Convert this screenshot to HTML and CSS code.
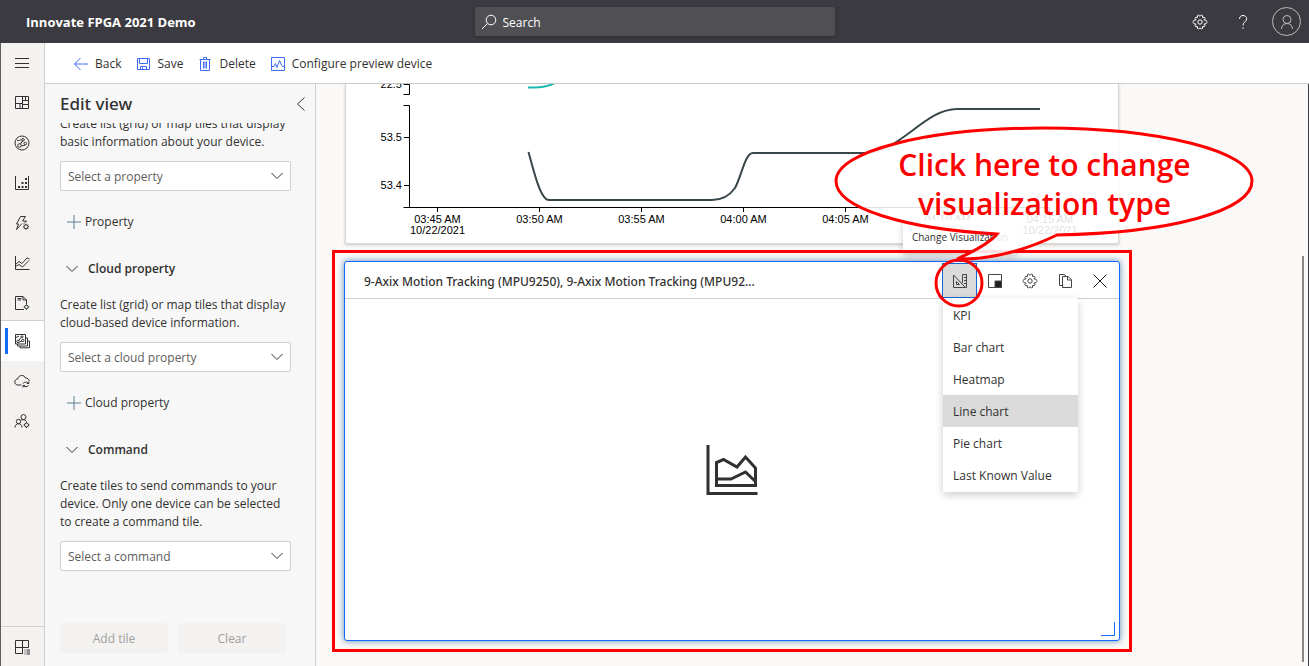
FILE: index.html
```
<!DOCTYPE html>
<html lang="en">
<head>
<meta charset="utf-8">
<title>Innovate FPGA 2021 Demo</title>
<link rel="stylesheet" href="styles.css">
</head>
<body>
<svg class="defs" aria-hidden="true">
  <symbol id="gear" viewBox="0 0 16 16"><path d="M6.700 1 8 2.300 9.300 1l1.200.5v1.900l1.900-.1.600 1.200L11.900 5.900 14 6.200l.8 1.200v1.200L14 9.800l-2.100.3 1.100 1.400-.6 1.200-1.900-.1v1.900L9.300 15 8 13.700 6.700 15l-1.200-.5v-1.900l-1.900.1L3 11.500l1.100-1.400L2 9.800l-.8-1.200V7.400L2 6.200l2.100-.3L3 4.500l.6-1.200 1.900.1V1.500z"/><circle cx="8" cy="8" r="2.200"/></symbol>
  <symbol id="chevron" viewBox="0 0 12 12"><path d="M.5 3 6 8.500 11.500 3"/></symbol>
  <symbol id="plus" viewBox="0 0 14 14"><path d="M7 0v14M0 7h14"/></symbol>
</svg>
<header class="topbar">
  <h1 class="brand">Innovate FPGA 2021 Demo</h1>
  <label class="search">
    <svg class="icon" viewBox="0 0 16 16"><circle cx="10" cy="6" r="4.800"/><path d="M6.500 9.500 1 15"/></svg>
    <input class="search-input" type="search" placeholder="Search" aria-label="Search">
  </label>
  <div class="top-actions">
    <button class="top-btn" aria-label="Settings"><svg class="icon"><use href="#gear"/></svg></button>
    <button class="top-btn" aria-label="Help"><svg class="icon" viewBox="0 0 16 16"><path d="M4.500 5C4.500 2.800 6 1.500 8 1.500S11.700 2.800 11.700 4.800C11.700 7.500 8 8 8 11.500M8 13.300v1.500"/></svg></button>
    <button class="avatar" aria-label="Account"><svg class="icon" viewBox="0 0 16 16"><circle cx="8" cy="5.500" r="4"/><path d="M2.500 15c0-3 2-5.500 5.500-5.500s5.500 2.500 5.500 5.500"/></svg></button>
  </div>
</header>
<div class="shell">
  <nav class="rail" aria-label="Main">
    <button class="rail-item" aria-label="Expand"><svg class="icon" viewBox="0 0 16 16"><path d="M1 3.500h14M1 8.500h14M1 12.500h14"/></svg></button>
    <a class="rail-item" href="#dashboard" aria-label="Dashboard"><svg class="icon" viewBox="0 0 16 16"><path d="M1.500 1.500h13v12h-13zM8.500 1.500v12M1.500 8.500h7M8.500 5.500h6M8.500 9.500h6M6 8.500v5M11.500 1.500v4"/></svg></a>
    <a class="rail-item" href="#devices" aria-label="Devices"><svg class="icon" viewBox="0 0 16 16"><circle cx="8" cy="8" r="7"/><circle cx="9" cy="4.800" r="1.300"/><circle cx="5.500" cy="10.500" r="1.800"/><circle cx="11.300" cy="8.600" r="1.300"/><path d="M8.500 6 6.500 9M7.300 10.800l2.500-.3 1.300-.7M3 5.500c2 .5 3.500-.5 4.500-1"/></svg></a>
    <a class="rail-item" href="#groups" aria-label="Device groups"><svg class="icon" viewBox="0 0 16 16"><path d="M1.500 1v13.500h13V1"/><path stroke-width="2" stroke-dasharray="2 2" d="M5 13V9M8.500 13V5M12 13V3"/></svg></a>
    <a class="rail-item" href="#rules" aria-label="Rules"><svg class="icon" viewBox="0 0 16 16"><path d="M8 8.500 2.500 14.500 4.500 9H2.500L6.500 1.500h5L8.500 6h4L10 8.500"/><circle cx="12" cy="11.700" r="2"/><path d="M12 8.700v1M12 13.700v1M9 11.700h1M14 11.700h1M9.900 9.600l.7.700M13.400 13.100l.7.700M14.100 9.600l-.7.700M10.600 13.100l-.7.700"/></svg></a>
    <a class="rail-item" href="#analytics" aria-label="Analytics"><svg class="icon" viewBox="0 0 16 16"><path d="M1.500 1v13.500H15.500M1.500 9.500 5 6.500l3 2L13 3l2.500 1M1.500 11.500 5 9.500 8.500 12 15 5.500"/></svg></a>
    <a class="rail-item" href="#jobs" aria-label="Jobs"><svg class="icon" viewBox="0 0 16 16"><path d="M10 14.500H1.500v-13H9l3.500 3.500v4M9 1.500V5h3.500M3.500 3.500h4M3.500 5H7"/><circle cx="12.500" cy="12" r="1.800"/><path d="M12.500 9.300v1M12.500 13.700v1M9.700 12h1M14.300 12h1"/></svg></a>
    <a class="rail-item rail-item-current" href="#templates" aria-label="Device templates" aria-current="page"><svg class="icon" viewBox="0 0 16 16"><path d="M1.500 1.500h10V11h-10zM3.500 11v2h10V5h-2M6 13v1.800h9.500V8h-2"/><circle cx="8" cy="3.800" r="1"/><circle cx="4" cy="8.500" r="1.300"/><circle cx="8.800" cy="7.500" r="1.200"/><path d="M7 4.500 4.800 7.500M5.300 9l2.500-1M2 4.500l3-1.500"/></svg></a>
    <a class="rail-item" href="#export" aria-label="Data export"><svg class="icon" viewBox="0 0 16 16"><path d="M7.500 12H4C2 12 .8 10.700.8 9s1.300-3 3-3C4 4 5.500 2.500 7.700 2.500c2 0 3.200 1 3.800 2.500 2 0 3.500 1.200 3.700 3M9 10.500c.5-1.500 4.500-2 5.500 0M14.800 8.500v2h-2M14.500 12.500c-.8 1.500-4.500 1.700-5.500 0M9 14.500v-2h2"/></svg></a>
    <a class="rail-item" href="#admin" aria-label="Permissions"><svg class="icon" viewBox="0 0 16 16"><circle cx="9.500" cy="4" r="2.500"/><circle cx="4.500" cy="8.500" r="2.200"/><path d="M1 14.500c0-5 7-5 7 0M6.500 7.300c.8-.8 5-1 6 1.200"/><circle cx="12.500" cy="12" r="2"/><path d="M12.500 9v1M12.500 14v1M9.500 12h1M14.500 12h1"/></svg></a>
    <a class="rail-item rail-item-last" href="#apps" aria-label="Application"><svg class="icon" viewBox="0 0 16 16"><path d="M9 14.500H1.500v-13h13V8.500M8.500 1.500v13M1.500 8.500h13M10.500 11h1M12.500 11H16M10.500 13h1M12.500 13H16M10.500 15h1M12.500 15H16"/></svg></a>
  </nav>
  <main class="main">
    <div class="commands">
      <button class="command"><svg class="icon" viewBox="0 0 16 16"><path d="M15 8H1.500M7.500 2l-6 6 6 6"/></svg>Back</button>
      <button class="command"><svg class="icon" viewBox="0 0 16 16"><path d="M2.500 2.500h12v11h-12zM4.500 2.500v5h8v-5M5.500 13.500v-3h6v3M7.500 11.500v2"/></svg>Save</button>
      <button class="command"><svg class="icon" viewBox="0 0 16 16"><path d="M2.500 3.500h11M6.500 3.500v-2h3v2M3.500 3.500v11h9v-11M6.500 5.500v7M8 5.500v7M9.500 5.500v7"/></svg>Delete</button>
      <button class="command"><svg class="icon" viewBox="0 0 16 16"><path d="M1.500 1.500h13v13h-13zM1.500 10.500H4l1.500-3L7 11.500l2.500-7L11.500 9l1 1.500h2"/></svg>Configure preview device</button>
    </div>
    <div class="workspace">
      <aside class="panel">
        <div class="panel-head">
          <h2 class="panel-title">Edit view</h2>
          <button class="collapse" aria-label="Collapse"><svg class="icon" viewBox="0 0 16 16"><path d="M11.500 1.500 4.500 8l7 6.500"/></svg></button>
        </div>
        <div class="panel-body">
          <section class="group group-scrolled">
            <p class="hint">Create list (grid) or map tiles that display basic information about your device.</p>
            <div class="picker"><select class="picker-field" aria-label="Property"><option>Select a property</option></select><svg class="picker-arrow"><use href="#chevron"/></svg></div>
            <button class="add"><svg class="add-icon"><use href="#plus"/></svg>Property</button>
          </section>
          <section class="group">
            <button class="group-toggle"><svg class="toggle-icon"><use href="#chevron"/></svg>Cloud property</button>
            <p class="hint">Create list (grid) or map tiles that display cloud-based device information.</p>
            <div class="picker"><select class="picker-field" aria-label="Cloud property"><option>Select a cloud property</option></select><svg class="picker-arrow"><use href="#chevron"/></svg></div>
            <button class="add"><svg class="add-icon"><use href="#plus"/></svg>Cloud property</button>
          </section>
          <section class="group">
            <button class="group-toggle"><svg class="toggle-icon"><use href="#chevron"/></svg>Command</button>
            <p class="hint">Create tiles to send commands to your device. Only one device can be selected to create a command tile.</p>
            <div class="picker"><select class="picker-field" aria-label="Command"><option>Select a command</option></select><svg class="picker-arrow"><use href="#chevron"/></svg></div>
          </section>
        </div>
        <div class="panel-foot">
          <button class="foot-btn" disabled>Add tile</button>
          <button class="foot-btn" disabled>Clear</button>
        </div>
      </aside>
      <div class="canvas">
        <section class="tile tile-chart">
          <svg class="chart" viewBox="346 84 772 159" role="img" aria-label="Telemetry line chart">
            <path class="axis" d="M403.500 84.500h6v10h-6M403.500 105.500h6v102M404 137.500h5M404 185.500h5M403.500 207.500H1050M437.500 207v5M539.500 207v5M641.500 207v5M743.500 207v5M845.500 207v5M947.500 207v5M1049.500 207v5"/>
            <path class="series series-teal" d="M528 87.500C538 88 547 87 555 83"/>
            <path class="series" d="M528.500 152C534 172 539 193 546 199Q547 200 550 200H712C722 200 730 195 735 188C742 175 745 153 753 153H865C900 153 925 108 958 109H1040"/>
            <g class="label" text-anchor="end"><text x="402" y="88">22.5</text><text x="402" y="141">53.5</text><text x="402" y="189">53.4</text></g>
            <g class="label" text-anchor="middle"><text x="437.500" y="223">03:45 AM</text><text x="437.500" y="234">10/22/2021</text><text x="539.500" y="223">03:50 AM</text><text x="641.500" y="223">03:55 AM</text><text x="743.500" y="223">04:00 AM</text><text x="845.500" y="223">04:05 AM</text><text x="947.500" y="223">04:10 AM</text><text x="1050" y="223">04:15 AM</text><text x="1050" y="234">10/22/2021</text></g>
          </svg>
        </section>
        <section class="tile tile-selected">
          <div class="tile-head">
            <h3 class="tile-title">9-Axix Motion Tracking (MPU9250), 9-Axix Motion Tracking (MPU92...</h3>
            <div class="tools">
              <button class="tool tool-active" aria-label="Change Visualization"><svg class="icon" viewBox="0 0 16 16"><path d="M1.500 2v12.500h12zM4.500 8.500v3h3zM10.500 10V1.500h4v13h-2M14 4.500h-2M14 7.500h-2M14 10.500h-2"/></svg></button>
              <button class="tool" aria-label="Resize"><svg class="icon" viewBox="0 0 16 16"><path d="M1.500 1.500h13v13h-13z"/><path class="fill" d="M8 8h6.500v6.500H8z"/></svg></button>
              <button class="tool" aria-label="Configure"><svg class="icon"><use href="#gear"/></svg></button>
              <button class="tool" aria-label="Copy"><svg class="icon" viewBox="0 0 16 16"><path d="M5 12.500H2.500v-11H7L9.500 3.500M5.500 3.500h5.500l3.500 3v8h-9zM10.500 3.500V7H14"/></svg></button>
              <button class="tool tool-close" aria-label="Delete tile"><svg class="icon" viewBox="0 0 16 16"><path d="M1.500 1.500l13 13M14.500 1.500l-13 13"/></svg></button>
            </div>
          </div>
          <div class="tile-body">
            <svg class="placeholder" viewBox="0 0 52 52"><path d="M2 1v48.500H51.500M10.500 41.500V18.500L17.500 15.500 31 23 39.500 13 49.500 24v17.500zM10.500 35H25L39.500 28 49.500 37.500"/></svg>
          </div>
          <span class="resize"></span>
          <ul class="menu">
            <li><button class="menu-item">KPI</button></li>
            <li><button class="menu-item">Bar chart</button></li>
            <li><button class="menu-item">Heatmap</button></li>
            <li><button class="menu-item menu-item-on">Line chart</button></li>
            <li><button class="menu-item">Pie chart</button></li>
            <li><button class="menu-item">Last Known Value</button></li>
          </ul>
          <div class="tooltip" role="tooltip">Change Visualization</div>
          <div class="frame"></div>
          <div class="callout">
            <svg class="callout-shape" viewBox="834 125 421 185"><path class="bubble" d="M1057 235C1170 233 1252 211 1252 181 1252 151 1159 128 1044 128S836 151 836 181C836 208 905 229 997 234Q988 245 957 259Q1005 260 1057 235Z"/><circle class="ring" cx="959" cy="283" r="23"/></svg>
            <p class="callout-text">Click here to change visualization type</p>
          </div>
        </section>
        <div class="scrollbar"></div>
      </div>
    </div>
  </main>
</div>
</body>
</html>
```
FILE: styles.css
```
* { box-sizing: border-box; }
body {
  margin: 0;
  height: 100vh;
  display: flex;
  flex-direction: column;
  overflow: hidden;
  font: 12px/18px "Open Sans", "Noto Sans", sans-serif;
  color: #323130;
  background: #faf9f8;
}
h1, h2, h3, p, ul { margin: 0; padding: 0; }
ul { list-style: none; }
button, input, select { font: inherit; color: inherit; border: 0; background: none; padding: 0; margin: 0; }
.defs { display: none; }
svg { fill: none; stroke: currentColor; }
svg text { fill: #000; stroke: none; }
.icon { display: block; width: 16px; height: 16px; flex: none; }

.topbar {
  height: 43px;
  flex: none;
  display: grid;
  grid-template-columns: 1fr 360px 1fr;
  align-items: center;
  background: #3b3a40;
  color: #fff;
}
.brand { padding-left: 26px; font-size: 13px; font-weight: 700; }
.search {
  height: 29px;
  display: flex;
  align-items: center;
  gap: 6px;
  padding-left: 6px;
  border-radius: 2px;
  background: #504f54;
  box-shadow: 0 1px 3px #0004;
}
.search-input { flex: 1; min-width: 0; outline: 0; padding-top: 2px; }
.search-input::placeholder { color: #fff; opacity: 1; }
.top-actions { display: flex; justify-content: flex-end; align-items: center; padding-right: 8px; }
.top-btn { width: 43px; display: grid; place-items: center; }
.avatar { width: 29px; height: 29px; margin-left: 8px; display: grid; place-items: center; border: 1px solid #bbb; border-radius: 50%; color: #bbb; }

.shell { flex: 1; min-height: 0; display: flex; border-left: 1px solid #605e5c; }
.rail { width: 44px; flex: none; display: flex; flex-direction: column; background: #f3f2f1; border-right: 1px solid #d2d0ce; }
.rail-item { height: 40px; flex: none; display: grid; place-items: center; padding-right: 1px; color: #323130; }
.rail-item-current { position: relative; height: 41px; margin-top: -3px; background: #fff; border-top: 1px solid #d2d0ce; }
.rail-item-current::before { content: ""; position: absolute; left: 4px; top: 7px; bottom: 7px; width: 3px; background: #136bfb; }
.rail-item-last { margin-top: auto; border-top: 1px solid #d2d0ce; }

.main { flex: 1; min-width: 0; display: flex; flex-direction: column; }
.commands { height: 41px; flex: none; display: flex; align-items: center; gap: 14px; padding: 1px 0 0 28px; background: #fff; border-bottom: 1px solid #d2d0ce; }
.command { display: flex; align-items: center; gap: 6px; }
.command .icon { color: #3f6df6; }
.workspace { flex: 1; min-height: 0; display: flex; }

.panel { width: 271px; flex: none; display: flex; flex-direction: column; background: #f7f7f7; border-right: 1px solid #d2d0ce; }
.panel-head { height: 39px; flex: none; display: flex; align-items: center; justify-content: space-between; padding: 0 6px 0 15px; }
.panel-title { font-family: "Noto Sans", "Open Sans", sans-serif; font-size: 17px; font-weight: 500; }
.panel-body { flex: 1; min-height: 0; overflow: hidden; padding: 0 24px 0 15px; }
.group-scrolled { margin-top: -8px; }
.picker { position: relative; margin-top: 10px; }
.picker-field { width: 100%; height: 30px; padding: 1px 30px 0 7px; appearance: none; background: #fff; border: 1px solid #d2d0ce; border-radius: 2px; color: #605e5c; }
.picker-arrow { position: absolute; right: 8px; top: 9px; width: 12px; height: 12px; pointer-events: none; }
.add { height: 30px; margin: 16px 0 0 7px; display: flex; align-items: center; gap: 4px; }
.add-icon { width: 14px; height: 14px; color: #5f8193; }
.group-toggle { height: 30px; margin: 17px 0 12px 6px; display: flex; align-items: center; gap: 10px; font-weight: 600; }
.toggle-icon { width: 12px; height: 12px; }
.panel-foot { flex: none; display: grid; grid-template-columns: 1fr 1fr; gap: 10px; padding: 8px 29px 13px 15px; }
.foot-btn { height: 30px; padding-top: 1px; border-radius: 2px; background: #f3f2f1; color: #a19f9d; }

.canvas { position: relative; flex: 1; min-width: 0; padding: 0 188px 0 28px; border-right: 1px solid #3b3a40; }
.scrollbar { position: absolute; right: 4px; top: 172px; bottom: 4px; width: 2px; background: #8a8886; }
.tile { background: #fff; }
.tile-chart { margin: 0 1px; border: 1px solid #d8d6d4; border-top: 0; box-shadow: 0 1px 3px #0003; }
.chart { display: block; width: 100%; height: auto; }
.axis { stroke: #000; }
.series { stroke: #37474a; stroke-width: 2; }
.series-teal { stroke: #12b8ae; }
.label { font: 11px "Liberation Sans", Arial, sans-serif; }

.tile-selected { position: relative; height: 380px; margin-top: 17px; display: flex; flex-direction: column; border: 1px solid #136bfb; border-radius: 3px; box-shadow: 0 0 6px #1c57a0b0; }
.tile-head { height: 37px; flex: none; display: flex; justify-content: space-between; padding: 1px 2px 0 19px; border-bottom: 1px solid #d2d0ce; }
.tile-title { align-self: center; padding-top: 3px; font-family: "Noto Sans", "Open Sans", sans-serif; font-size: 12px; font-weight: 500; white-space: nowrap; }
.tools { display: flex; }
.tool { width: 35px; display: grid; place-items: center; color: #484644; }
.tool-close { color: #201f1e; }
.tool-active { background: #dadada; border: 1px solid #1166d0; }
.fill { fill: #201f1e; }
.tile-body { flex: 1; display: grid; place-items: center; }
.placeholder { width: 52px; height: 52px; stroke-width: 3; }
.resize { position: absolute; right: 4px; bottom: 4px; width: 14px; height: 14px; border-right: 1px solid #136bfb; border-bottom: 1px solid #136bfb; }
.menu { position: absolute; right: 41px; top: 36px; width: 135px; padding: 1px 0; background: #fff; border-radius: 2px; box-shadow: 0 3px 8px #0003; }
.menu-item { display: block; width: 100%; height: 32px; padding: 2px 10px 0; text-align: left; }
.menu-item-on { background: #dadada; }
.tooltip { position: absolute; right: 102px; top: -42px; width: 114px; height: 33px; display: grid; place-items: center; background: #fff; font-size: 10px; white-space: nowrap; box-shadow: 0 3px 7px #0003; }
.tooltip::after { content: ""; position: absolute; left: 50px; bottom: -6px; width: 12px; height: 12px; background: #fff; transform: rotate(45deg); z-index: -1; }
.frame { position: absolute; inset: -12px -13px -12px; border: 3px solid #f00; pointer-events: none; }
.callout { position: absolute; right: -136px; top: -137px; width: 421px; height: 185px; color: #f00; pointer-events: none; }
.callout-shape { display: block; width: 100%; height: 100%; stroke-width: 3; }
.bubble { fill: #fff; fill-opacity: .88; }
.callout-text { position: absolute; left: 50px; right: 50px; top: 20px; text-align: center; font-size: 30px; line-height: 39px; font-weight: 600; }
```
